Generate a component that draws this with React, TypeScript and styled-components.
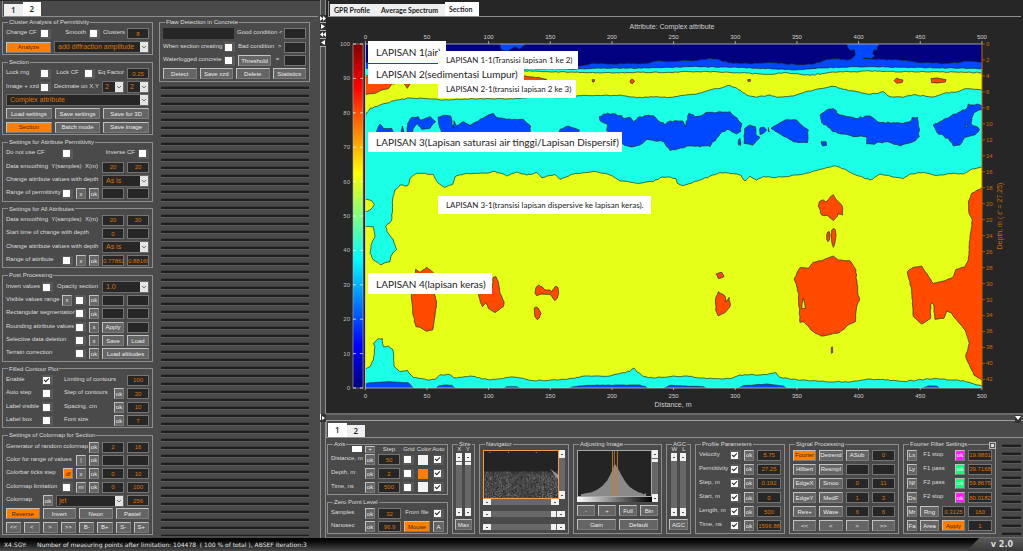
import React from 'react';
import styled, { createGlobalStyle, css } from 'styled-components';

const c = {
  bg: '#4a4a4a',
  dark: '#262626',
  line: '#8e8e8e',
  text: '#dcdcdc',
  orange: '#ff8000',
  value: '#dc7408',
  button: '#656565',
};

const Global = createGlobalStyle`
  *, *::before, *::after { box-sizing: border-box; }
  body { margin: 0; background: ${c.bg}; color: ${c.text}; font: 6px/8px "Liberation Sans", Arial, sans-serif; }
  button, input, select { font: inherit; margin: 0; padding: 0; border-radius: 0; }
`;

const Page = styled.div`
  display: flex;
  flex-direction: column;
  min-height: 100vh;
`;
const Main = styled.main`
  flex: 1;
  display: flex;
`;
const Sidebar = styled.aside`
  flex: 0 0 320px;
  display: flex;
  flex-direction: column;
  border-top: 1px solid #2a2a2a;
`;
const TabBar = styled.nav`
  display: flex;
  align-items: flex-end;
  height: 16px;
  margin: 0 2px 0 2px;
  padding-left: 1px;
  border-left: 1px solid ${c.line};
  border-bottom: 1px solid ${c.line};
`;
const ToolTabBar = styled(TabBar)`
  height: 17px;
  margin: 0;
`;
const Tab = styled.button<{ $on?: boolean; $wide?: boolean }>`
  height: ${p => (p.$on ? 14 : 12)}px;
  padding: ${p => (p.$wide ? '0 7px 0 4px' : '0 7px')};
  border: 0;
  background: ${p => (p.$on ? '#fff' : '#efefef')};
  color: #1c1c1c;
  font: ${p => (p.$wide ? 'bold 7px/10px Lato' : '600 8px/10px "Open Sans"')}, sans-serif;
`;
const SideColumns = styled.div`
  flex: 1;
  display: grid;
  grid-template-columns: 151px 151px;
  gap: 6px;
  padding: 1px 0 0 2px;
`;
const GroupColumn = styled.div`
  display: grid;
  grid-template-rows: minmax(0, 3fr) minmax(0, 6fr) minmax(0, 5fr) minmax(0, 5fr) minmax(0, 7fr) minmax(0, 5fr) minmax(0, 8fr);
`;
const FlawColumn = styled.div`
  display: grid;
  grid-template-rows: minmax(0, 5fr) minmax(0, 34fr);
`;
const Stripes = styled.div<{ $low?: boolean }>`
  margin: ${p => (p.$low ? 4 : 1)}px 1px 2px 2px;
  background: repeating-linear-gradient(#3a3a3a 0 1px, #1f1f1f 1px 3px, #5a5a5a 3px 4px, ${c.bg} 4px 8px);
`;
const Group = styled.fieldset<{ $flush?: boolean }>`
  display: grid;
  grid-auto-rows: minmax(0, 1fr);
  min-width: 0;
  margin: 0 0 3px;
  padding: ${p => (p.$flush ? '0 3px' : '1px 3px 0')};
  border: 1px solid ${c.line};
  legend {
    height: 8px;
    margin-left: 2px;
    padding: 0 1px;
    white-space: nowrap;
  }
`;
const Row = styled.div<{ $cols: string }>`
  display: grid;
  grid-template-columns: ${p => p.$cols};
  gap: 3px;
  align-items: center;
  min-width: 0;
`;
const Label = styled.label<{ $align?: string; $indent?: boolean }>`
  padding-bottom: 3px;
  padding-left: ${p => (p.$indent ? 8 : 0)}px;
  text-align: ${p => p.$align || 'left'};
  white-space: nowrap;
  min-width: 0;
`;
const Value = styled.input`
  width: 100%;
  min-width: 0;
  height: 11px;
  border: 1px solid #757575;
  background: ${c.dark};
  color: ${c.value};
  text-align: center;
`;
const Readout = styled.output`
  height: 11px;
  background: ${c.dark};
`;
const tones: Record<string, [string, string]> = {
  orange: [c.orange, '#3c2600'],
  magenta: ['#ff1cff', '#fff'],
  green: ['#10ff7c', '#fff'],
};
const Btn = styled.button<{ $tone?: string }>`
  width: 100%;
  height: 11px;
  overflow: hidden;
  border: 1px solid;
  border-color: #c2c2c2 #7c7c7c #7c7c7c #c2c2c2;
  background: ${p => (p.$tone ? tones[p.$tone][0] : c.button)};
  color: ${p => (p.$tone ? tones[p.$tone][1] : '#ececec')};
  line-height: 8px;
  white-space: nowrap;
`;
const TickBox = styled.span`
  display: flex;
  align-items: center;
  width: 11px;
  height: 10px;
  padding-left: 1px;
  background: #5a5a5a;
`;
const Tick = styled.input`
  appearance: none;
  width: 7px;
  height: 7px;
  background: #fff;
  &:checked::before {
    content: '';
    display: block;
    width: 5px;
    height: 3px;
    margin: 1px;
    border: solid #222;
    border-width: 0 0 1px 1px;
    transform: rotate(-45deg);
  }
`;
const SelectWrap = styled.span`
  display: grid;
  grid-template-columns: minmax(0, 1fr) 8px;
  height: 12px;
  border: 1px solid #6a6a6a;
  background: ${c.dark};
`;
const SelectBox = styled.select<{ $small?: boolean }>`
  appearance: none;
  grid-area: 1 / 1 / 2 / 3;
  padding-left: ${p => (p.$small ? 2 : 3)}px;
  border: 0;
  background: transparent;
  color: ${c.value};
  font-size: 7px;
`;
const SelectArrow = styled.svg`
  grid-area: 1 / 2;
  width: 8px;
  height: 10px;
  background: #e4e4e4;
  pointer-events: none;
`;

const Check = ({ id, on, label }: { id?: string; on?: boolean; label?: string }) => (
  <TickBox><Tick type="checkbox" id={id} aria-label={label} defaultChecked={on} /></TickBox>
);
const V = ({ id, v = '', label }: { id?: string; v?: string; label?: string }) => (
  <Value id={id} aria-label={label} defaultValue={v} />
);
const Select = ({ id, v, label, small }: { id?: string; v: string; label?: string; small?: boolean }) => (
  <SelectWrap>
    <SelectBox id={id} aria-label={label} defaultValue={v} $small={small}><option>{v}</option></SelectBox>
    <SelectArrow viewBox="0 0 8 10"><path d="M2 4l2 2 2-2" fill="none" stroke="#777" /></SelectArrow>
  </SelectWrap>
);

const SideGroups = () => (
  <GroupColumn>
    <Group>
      <legend>Cluster Analysis of Permittivity</legend>
      <Row $cols="31px 11px 1fr 11px 21px 22px">
        <Label htmlFor="ccf">Change CF</Label><Check id="ccf" />
        <Label htmlFor="smooth" $align="right">Smooth</Label><Check id="smooth" />
        <Label htmlFor="clusters">Clusters</Label><V id="clusters" v="8" />
      </Row>
      <Row $cols="45px 1fr">
        <Btn $tone="orange">Analyze</Btn><Select label="Cluster mode" v="add diffraction amplitude" />
      </Row>
    </Group>
    <Group>
      <legend>Section</legend>
      <Row $cols="31px 11px 27px 11px 1fr 22px">
        <Label htmlFor="lrng">Lock rng</Label><Check id="lrng" />
        <Label htmlFor="lcf" $align="center">Lock CF</Label><Check id="lcf" />
        <Label htmlFor="eq" $align="center">Eq Factor</Label><V id="eq" v="0.25" />
      </Row>
      <Row $cols="31px 11px 1fr 22px 22px">
        <Label htmlFor="xzd">Image + xzd</Label><Check id="xzd" />
        <Label htmlFor="decx" $align="center">Decimate on X,Y</Label>
        <Select id="decx" v="2" small /><Select label="Decimate on Y" v="2" small />
      </Row>
      <Row $cols="1fr"><Select label="Attribute" v="Complex attribute" /></Row>
      <Row $cols="1fr 1fr 1fr"><Btn>Load settings</Btn><Btn>Save settings</Btn><Btn>Save for 3D</Btn></Row>
      <Row $cols="1fr 1fr 1fr"><Btn $tone="orange">Section</Btn><Btn>Batch mode</Btn><Btn>Save image</Btn></Row>
    </Group>
    <Group>
      <legend>Settings for Attribute Permittivity</legend>
      <Row $cols="53px 11px 1fr 11px">
        <Label htmlFor="nocf">Do not use CF</Label><Check id="nocf" />
        <Label htmlFor="inv" $align="right">Inverse CF</Label><Check id="inv" />
      </Row>
      <Row $cols="1fr 22px 22px">
        <Label htmlFor="pds">Data smoothing&nbsp; Y(samples)&nbsp; X(m)</Label><V id="pds" v="20" /><V label="X(m)" v="20" />
      </Row>
      <Row $cols="1fr 47px">
        <Label htmlFor="pdep">Change attribute values with depth</Label><Select id="pdep" v="As is" />
      </Row>
      <Row $cols="1fr 11px 10px 10px 22px 22px">
        <Label htmlFor="prange">Range of permittivity</Label><Check id="prange" />
        <Btn>x</Btn><Btn>ok</Btn><V label="Minimum" /><V label="Maximum" />
      </Row>
    </Group>
    <Group>
      <legend>Settings for All Attributes</legend>
      <Row $cols="1fr 22px 22px">
        <Label htmlFor="ads">Data smoothing&nbsp; Y(samples)&nbsp; X(m)</Label><V id="ads" v="20" /><V label="X(m)" v="20" />
      </Row>
      <Row $cols="1fr 22px 22px">
        <Label htmlFor="ast">Start time of change with depth</Label><V id="ast" v="0" /><V label="End time" />
      </Row>
      <Row $cols="1fr 47px">
        <Label htmlFor="adep">Change attribute values with depth</Label><Select id="adep" v="As is" />
      </Row>
      <Row $cols="1fr 11px 10px 10px 22px 22px">
        <Label htmlFor="arange">Range of attribute</Label><Check id="arange" />
        <Btn>x</Btn><Btn>ok</Btn><V label="Minimum" v="0.77862" /><V label="Maximum" v="0.88169" />
      </Row>
    </Group>
    <Group>
      <legend>Post Processing</legend>
      <Row $cols="33px 11px 1fr 47px">
        <Label htmlFor="invv">Invert values</Label><Check id="invv" />
        <Label htmlFor="opac" $align="center">Opacity section</Label><Select id="opac" v="1.0" />
      </Row>
      <Row $cols="1fr 10px 11px 10px 22px 22px">
        <Label htmlFor="vis">Visible values range</Label><Btn>x</Btn><Check id="vis" /><Btn>ok</Btn>
        <V label="From" /><V label="To" />
      </Row>
      <Row $cols="1fr 11px 10px 22px 22px">
        <Label htmlFor="rect">Rectangular segmentation</Label><Check id="rect" /><Btn>ok</Btn>
        <V label="Width" /><V label="Height" />
      </Row>
      <Row $cols="1fr 11px 10px 22px 22px">
        <Label htmlFor="round">Rounding attribute values</Label><Check id="round" /><Btn>x</Btn>
        <Btn>Apply</Btn><V label="Rounding step" />
      </Row>
      <Row $cols="1fr 11px 10px 22px 22px">
        <Label htmlFor="seldel">Selective data deletion</Label><Check id="seldel" /><Btn>x</Btn>
        <Btn>Save</Btn><Btn>Load</Btn>
      </Row>
      <Row $cols="1fr 11px 10px 47px">
        <Label htmlFor="terrain">Terrain correction</Label><Check id="terrain" /><Btn>ok</Btn><Btn>Load altitudes</Btn>
      </Row>
    </Group>
    <Group>
      <legend>Filled Contour Plot</legend>
      <Row $cols="33px 11px 1fr 22px">
        <Label htmlFor="en">Enable</Label><Check id="en" on />
        <Label htmlFor="lim" $indent>Limiting of contours</Label><V id="lim" v="100" />
      </Row>
      <Row $cols="33px 11px 1fr 10px 22px">
        <Label htmlFor="auto">Auto step</Label><Check id="auto" />
        <Label htmlFor="stepc" $indent>Step of contours</Label><Btn>ok</Btn><V id="stepc" v="20" />
      </Row>
      <Row $cols="33px 11px 1fr 10px 22px">
        <Label htmlFor="lv">Label visible</Label><Check id="lv" />
        <Label htmlFor="spac" $indent>Spacing, cm</Label><Btn>ok</Btn><V id="spac" v="10" />
      </Row>
      <Row $cols="33px 11px 1fr 10px 22px">
        <Label htmlFor="lb">Label box</Label><Check id="lb" />
        <Label htmlFor="fs" $indent>Font size</Label><Btn>ok</Btn><V id="fs" v="7" />
      </Row>
    </Group>
    <Group>
      <legend>Settings of Colormap for Section</legend>
      <Row $cols="1fr 10px 22px 22px">
        <Label htmlFor="gen">Generator of random colormap</Label><Btn>ok</Btn><V id="gen" v="2" /><V label="Colors" v="16" />
      </Row>
      <Row $cols="1fr 10px 10px 22px 22px">
        <Label htmlFor="crv">Color for range of values</Label><Btn>|</Btn><Btn>ok</Btn><V id="crv" /><V label="To" />
      </Row>
      <Row $cols="1fr 10px 10px 10px 22px 22px">
        <Label htmlFor="cts">Colorbar ticks step</Label><Btn $tone="orange">df</Btn><Btn>x</Btn><Btn>ok</Btn>
        <V id="cts" v="0" /><V label="Step" v="10" />
      </Row>
      <Row $cols="1fr 11px 10px 10px 22px 22px">
        <Label htmlFor="cl">Colormap limitation</Label><Check id="cl" /><Btn>m</Btn><Btn>ok</Btn>
        <V label="Low limit" v="0" /><V label="High limit" v="100" />
      </Row>
      <Row $cols="34px 10px 1fr 22px">
        <Label htmlFor="cmap">Colormap</Label><Btn>ok</Btn><Select id="cmap" v="jet" small /><V label="Color count" v="256" />
      </Row>
      <Row $cols="repeat(4, 1fr)"><Btn $tone="orange">Reverse</Btn><Btn>Invert</Btn><Btn>Neon</Btn><Btn>Pastel</Btn></Row>
      <Row $cols="repeat(8, 1fr)">
        {['<<', '<', '>', '>>', 'B-', 'B+', 'S-', 'S+'].map(t => <Btn key={t}>{t}</Btn>)}
      </Row>
    </Group>
  </GroupColumn>
);

const FlawGroup = () => (
  <Group>
    <legend>Flaw Detection in Concrete</legend>
    <Row $cols="71px 1fr 22px">
      <Readout /><Label htmlFor="good">Good condition &lt;</Label><V id="good" />
    </Row>
    <Row $cols="58px 11px 1fr 22px">
      <Label htmlFor="wsc">When section creating</Label><Check id="wsc" />
      <Label htmlFor="bad">Bad condition&nbsp; &gt;</Label><V id="bad" />
    </Row>
    <Row $cols="58px 11px 33px 1fr 22px">
      <Label htmlFor="wc">Waterlogged concrete</Label><Check id="wc" />
      <Btn>Threshold</Btn><Label htmlFor="thr" $align="center">=</Label><V id="thr" />
    </Row>
    <Row $cols="repeat(4, 1fr)"><Btn>Detect</Btn><Btn>Save xzd</Btn><Btn>Delete</Btn><Btn>Statistics</Btn></Row>
  </Group>
);

/* Splitters between the panels */
const VSplit = styled.div`
  flex: 0 0 6px;
  width: 6px;
  min-width: 0;
  display: flex;
  flex-direction: column;
  padding-top: 15px;
  border: solid ${c.line};
  border-width: 0 1px;
`;
const SplitButton = styled.button<{ $bare?: boolean }>`
  display: flex;
  width: 6px;
  height: 8px;
  margin-left: -1px;
  border: solid #b0b0b0;
  border-width: ${p => (p.$bare ? 0 : '0 0 1px')};
  background: #333;
  svg { width: 6px; height: 7px; fill: #fff; }
`;
const SplitSpacer = styled.div`
  flex: 1;
`;
const SplitFoot = styled.div`
  flex: 0 0 124px;
`;
const HSplit = styled.div`
  display: flex;
  justify-content: flex-end;
  height: 8px;
  padding-right: 2px;
  border-top: 2px solid #6c6c6c;
  border-bottom: 1px solid #a0a0a0;
`;

const Work = styled.div`
  flex: 1;
  min-width: 0;
  display: flex;
  flex-direction: column;
`;
const PlotPanel = styled.section`
  flex: 1;
  padding-top: 1px;
  background: ${c.dark};
`;
const Plot = styled.svg`
  display: block;
  width: 100%;
  height: auto;
`;

/* Contour outlines, in thirds of a chart unit from (320, 0) */
type Pt = [number, number];
const pts = (s: string, dx = 0, dy = 0): Pt[] =>
  s.trim().split(/\s+/).map(t => {
    const [x, y] = t.split(',').map(Number);
    return [x + dx, y + dy] as Pt;
  });
const R = (s: string) => pts(s, 1050, 0);
const L = (s: string) => pts(s);
const LR = (s: string) => pts(s, 1050, 630);

let seed = 7;
const rnd = () => {
  seed = (seed * 16807) % 2147483647;
  return seed / 2147483647;
};
const rough = (list: Pt[], amp = 3): string => {
  const out: string[] = [];
  list.forEach(([x, y], i) => {
    const [nx, ny] = list[(i + 1) % list.length];
    const n = Math.max(1, Math.min(70, Math.round(Math.hypot(nx - x, ny - y) / 8)));
    for (let k = 0; k < n; k++) {
      const t = k / n;
      const j = k ? amp : 0;
      out.push(`${Math.round(x + (nx - x) * t + (rnd() - 0.5) * j)},${Math.round(y + (ny - y) * t + (rnd() - 0.5) * j)}`);
    }
  });
  return out.join(' ');
};

const NAVY = '#000080';
const BLUE = '#0048ff';
const CYAN = '#1affe5';
const YELLOW = '#e6ff19';
const RED = '#ff4a00';

const upperYellow = [
  ...L('120,226 612,212 700,216 850,218 1050,217'),
  ...R('100,214 200,218 300,223 350,218 420,226 480,217 600,213 700,215 945,218'),
  ...R('945,272 890,266 860,276 830,278 790,291 730,284 700,292 660,290 640,275 600,283 520,268 490,259 450,266 400,278 370,288 320,292 300,285 260,292 230,285 200,264 180,256 150,265 120,270 80,282 40,286 0,292'),
  ...L('1000,291 950,293 900,285 850,286 790,286 750,292 640,292 570,296 450,296 370,300 330,297 270,294 230,300 180,315 150,325 136,350 120,350'),
];
const upperBlue = [
  ...L('120,120'), ...R('945,120 945,206 700,202 560,200 450,204 380,210 200,202 60,200'),
  ...L('1050,202 950,205 850,204 770,207 120,204'),
];
const navy = [
  ...L('120,120 540,120 540,134 545,150 565,153 585,140 600,148 615,134 615,120'),
  ...R('528,120 532,140 543,152 552,148 556,165 545,176 530,180 490,176 460,182 430,192 380,194 340,190 300,187 240,191 175,188 150,180 120,175 100,178 75,182 40,181 0,184'),
  ...L('1020,182 980,190 870,192 820,190 770,200 355,187 120,187'),
];
const navyRight = R('627,120 945,120 945,188 900,183 830,190 760,188 690,180 620,178 580,175 604,176 615,168 608,160 612,150 622,150');
const lowerYellow = [
  ...L('120,679 160,680 165,710 155,730 150,760 160,780 180,794 210,785 215,765 230,748 220,720 205,700 197,680 215,660 218,630 218,600 225,570 240,555 262,558 275,530 290,520 340,523 355,550 375,562 398,553 405,530 440,520 500,520 525,514 560,528 590,516 620,525 650,518 665,533 705,523 720,538 760,522 820,514 870,525 900,543 950,550 1000,545 1020,533 1050,531'),
  ...R('18,536 22,550 40,557 90,540 150,518 200,522 212,525 225,543 240,528 260,540 280,530 320,532 390,524 440,512 490,498 510,502 550,522 600,540 630,522 700,536 720,522 760,517 800,527 850,520 880,522 900,510 945,499'),
  ...R('945,1160 936,1158 880,1142 790,1136 700,1144 600,1137 540,1146 450,1144 380,1139 330,1132 318,1118 290,1124 210,1125 180,1136 110,1136 50,1128'),
  ...L('1050,1130 1000,1134 970,1130 950,1115 942,1104 930,1114 900,1120 870,1128 800,1128 740,1138 640,1142 580,1131 510,1140 450,1128 400,1133 390,1124 360,1124 345,1138 330,1140 280,1132 262,1111 240,1115 222,1098 218,1048 205,1038 190,1040 187,1016 175,1016 160,1030 165,1040 160,1080 150,1100 136,1108 120,1108'),
];

const shapes: [string, Pt[], number?][] = [
  [BLUE, upperBlue, 2],
  [NAVY, navy, 3],
  [NAVY, navyRight, 3],
  [YELLOW, upperYellow, 3],
  [RED, L('120,229 160,232 235,240 225,252 215,252 205,266 180,272 165,280 120,285')],
  [RED, L('250,250 262,265 272,250')],
  [RED, L('600,228 625,230 655,232 680,238 655,245 600,242')],
  [RED, L('816,239 824,239 822,246 818,246'), 0],
  [RED, L('930,242 936,237 944,243 938,251 932,249'), 0],
  [RED, R('233,239 241,238 241,244 234,244'), 0],
  [RED, R('672,242 680,234 688,238 699,240 697,247 680,250'), 1],
  [RED, R('783,236 800,234 828,239 826,246 800,249 785,248'), 1],
  [YELLOW, lowerYellow],
  [YELLOW, L('120,598 140,598 155,602 163,613 158,622 150,630 142,634 120,636'), 0],
  [BLUE, L('165,400 180,372 190,385 215,385 222,400')],
  [BLUE, L('243,400 247,378 252,400'), 1],
  [BLUE, L('260,400 263,370 275,352 295,350 300,360 330,350 347,365 330,385 305,388 292,370 280,385 278,400')],
  [BLUE, L('354,352 370,346 392,348 396,365 400,385 402,362 410,378 430,365 450,376 480,358 520,340 530,352 560,358 610,358 632,378 628,400 365,400 356,370')],
  [BLUE, L('716,400 720,388 745,378 778,390 776,400')],
  [BLUE, [
    ...L('838,350 850,342 880,341 918,355 930,352 940,365 960,350 1000,347 1012,360 1035,375 1050,363'),
    ...R('38,363 47,380 57,340 75,350 120,337 180,335 195,350 215,370 212,395 200,402 185,395 170,388 150,402 120,440 60,438 0,452'),
    ...L('1030,425 980,418 960,435 930,440 905,430 870,400 860,392 862,372 840,362'),
  ], 5],
  [BLUE, R('224,386 240,375 256,380 258,405 270,412 248,436 222,430')],
  [BLUE, R('270,384 282,382 290,390 280,400 270,404'), 2],
  [BLUE, R('205,420 210,415 212,436 205,434'), 1],
  [BLUE, R('295,382 298,396 295,394'), 1],
  [BLUE, R('303,385 345,360 380,360 400,380 415,390 412,428 370,425 335,405')],
  [BLUE, R('453,425 468,425 470,436 458,438'), 1],
  [BLUE, R('450,345 470,330 490,326 510,345 555,355 600,348 630,368 700,370 720,365 727,352 743,352 748,410 730,425 690,438 650,425 605,432 590,432 588,410 550,410 490,395 470,375 455,368'), 5],
  [BLUE, R('790,375 830,355 870,335 890,325 895,312 945,317 945,326 912,338 903,370 928,388 915,405 885,412 870,435 850,438 835,415 800,397'), 5],
  [CYAN, R('887,374 891,374 891,382 887,382'), 0],
  [BLUE, L('120,1152 170,1147 210,1145 265,1148 290,1175 120,1175'), 1],
  [BLUE, L('345,1170 355,1158 375,1155 395,1156 412,1170'), 1],
  [BLUE, L('545,1170 560,1160 590,1160 610,1170'), 1],
  [BLUE, L('735,1170 760,1160 800,1156 960,1155 980,1162 990,1175'), 1],
  [BLUE, L('1010,1175 1050,1156 1150,1160 1180,1175'), 1],
  [BLUE, R('195,1170 220,1157 290,1152 340,1158 355,1170'), 1],
  [BLUE, R('745,1170 775,1158 800,1158 815,1170'), 1],
  [RED, L('287,808 300,817 320,802 340,818 342,880 350,905 345,950 338,990 320,994 300,982 288,980 278,940 274,885'), 2],
  [RED, L('475,885 515,870 520,832 528,830 535,845 540,880 552,905 550,920 525,938 505,925 497,908 487,920'), 2],
  [RED, L('645,880 648,862 656,855 668,862 675,870 690,870 694,876 706,859 714,862 716,880 712,894 705,902 690,883 665,882 650,887'), 1],
  [RED, L('643,924 648,921 655,925 663,940 658,954 652,959 645,950'), 1],
  [RED, R('445,618 448,605 460,600 468,606 490,584 500,600 518,622 518,645 505,642 490,662 475,648 455,645'), 3],
  [RED, LR('470,75 473,66 478,65 480,75 478,90 474,95 470,88'), 0],
  [RED, LR('485,60 492,55 496,60 498,75 495,98 490,112 486,100 484,80'), 0],
  [RED, LR('138,192 155,187 162,200 145,206'), 2],
  [RED, LR('145,245 165,258 168,276 178,262 180,290 165,308 145,318 137,300 137,265')],
  [RED, LR('373,205 390,173 415,175 430,157 460,150 490,138 505,150 540,152 558,180 563,245 569,270 560,290 556,335 540,342 510,367 475,375 453,378 430,365 400,335 390,337 386,250')],
  [YELLOW, LR('398,266 401,266 407,295 395,296'), 1],
  [RED, LR('484,412 487,410 488,428 484,430'), 0],
  [RED, LR('712,185 730,172 755,168 770,190 790,220 825,212 850,200 858,178 885,170 895,150 900,80 907,30 897,10 895,-25 905,-50 936,-67 950,-70 950,512 936,510 912,495 905,480 887,440 898,400 885,360 860,330 845,310 830,303 822,325 795,328 790,282 786,278 782,285 782,325 755,342 730,320 725,240'), 2],
];
const contours = shapes.map(([fill, list, amp]) => ({ fill, points: rough(list, amp ?? 3) }));

const notes: [number, number, number, number, number, string][] = [
  [368, 41, 78, 22, 10, 'LAPISAN 1(air)'],
  [368, 64, 156, 20, 10, 'LAPISAN 2(sedimentasi Lumpur)'],
  [438, 51, 140, 18, 8, 'LAPISAN 1-1(Transisi lapisan 1 ke 2)'],
  [438, 80, 138, 18, 8, 'LAPISAN 2-1(transisi lapisan 2 ke 3)'],
  [368, 132, 254, 20, 10, 'LAPISAN 3(Lapisan saturasi air tinggi/Lapisan Dispersif)'],
  [438, 196, 213, 18, 8, 'LAPISAN 3-1(transisi lapisan dispersive ke lapisan keras).'],
  [368, 273, 124, 21, 10, 'LAPISAN 4(lapisan keras)'],
];

const steps = (n: number) => Array.from({ length: n }, (_, i) => i);

const SectionPlot = () => (
  <Plot viewBox="326 17 697 396" role="img" aria-label="Section of complex attribute">
    <defs>
      <linearGradient id="jet" x1="0" y1="1" x2="0" y2="0">
        <stop offset="0" stopColor="#00007c" /><stop offset=".125" stopColor="#0000ff" />
        <stop offset=".375" stopColor="#00ffff" /><stop offset=".625" stopColor="#ffff00" />
        <stop offset=".875" stopColor="#ff0000" /><stop offset="1" stopColor="#800000" />
      </linearGradient>
      <clipPath id="area"><rect x="365" y="44" width="617" height="344" /></clipPath>
    </defs>
    <text x="672" y="29" textAnchor="middle" fontSize="7" fill="#cfcfcf">Attribute:  Complex attribute</text>
    <rect x="353" y="44" width="10" height="344" fill="url(#jet)" stroke="#b0b0b0" strokeWidth=".6" />
    {steps(11).map(i => {
      const y = 388 - i * 34.4;
      return (
        <g key={i}>
          <path d={`M353 ${y}h3M360 ${y}h3`} stroke="#fff" strokeWidth=".7" />
          <text x="350" y={y + 2} textAnchor="end" fontSize="6" fill="#bdbdbd">{i * 10}</text>
        </g>
      );
    })}
    <g clipPath="url(#area)">
      <rect x="365" y="44" width="617" height="344" fill={CYAN} />
      <g transform="translate(320 0) scale(.33333)" stroke="#1c2420" strokeWidth="2" strokeLinejoin="round">
        {contours.map((s, i) => <polygon key={i} points={s.points} fill={s.fill} />)}
      </g>
    </g>
    <path d="M365.5 388V44M365 44H982M365 388H982" fill="none" stroke="#c4c4c4" strokeWidth=".8" />
    {steps(11).map(i => {
      const x = 365.3 + i * 61.66;
      return (
        <g key={i} fontSize="6" fill="#cfcfcf" textAnchor="middle">
          <path d={`M${x} 41v3M${x} 388v2`} stroke="#c4c4c4" strokeWidth=".8" />
          <text x={x} y="39">{i * 50}</text>
          <text x={x} y="398">{i * 50}</text>
        </g>
      );
    })}
    <text x="673" y="407" textAnchor="middle" fontSize="7" fill="#cfcfcf">Distance, m</text>
    <path d="M982 44V388" stroke="#c86400" />
    {steps(22).map(i => {
      const y = 44 + i * 15.97;
      return (
        <g key={i}>
          <path d={`M982 ${y}h3`} stroke="#c86400" strokeWidth=".8" />
          <text x="986" y={y + 2} fontSize="6" fill="#d06a04">{i * 2}</text>
        </g>
      );
    })}
    <text transform="translate(1002 216) rotate(-90)" textAnchor="middle" fontSize="7" fill="#d06a04">Depth, m ( ε' = 27.25)</text>
    {notes.map(([x, y, w, h, size, t]) => (
      <g key={t}>
        <rect x={x} y={y} width={w} height={h} fill="#fff" />
        <text x={x + 8} y={y + h / 2 + (size > 9 ? 4 : 3)} fontSize={size} fill="#222" fontFamily="Lato, sans-serif">{t}</text>
      </g>
    ))}
  </Plot>
);

/* Bottom tool panel */
const Tools = styled.section`
  display: flex;
  flex-direction: column;
  flex: none;
  height: 117px;
  border-bottom: 1px solid #707070;
`;
const ToolGrid = styled.div`
  flex: 1;
  min-height: 0;
  display: grid;
  grid-template-rows: minmax(0, 1fr);
  grid-template-columns: 121fr 23fr 90fr 89fr 25fr 90fr 110fr 93fr 22fr;
  gap: 4px;
  padding: 2px 1px 0;
`;
const Stack = styled.div`
  display: grid;
  grid-template-rows: minmax(0, 57fr) minmax(0, 38fr);
  min-width: 0;
`;
const AxisBody = styled.div`
  display: grid;
  grid-template-rows: 8px;
  grid-auto-rows: minmax(0, 1fr);
  margin-top: -3px;
`;
const Swatch = styled.span<{ $color: string; $short?: boolean }>`
  width: 10px;
  height: ${p => (p.$short ? 6 : 10)}px;
  background: ${p => p.$color};
`;
const HeadText = styled.span`
  display: flex;
  justify-content: center;
  min-width: 0;
  white-space: nowrap;
`;
const PlusBtn = styled(Btn)`
  height: 7px;
  line-height: 5px;
`;
const Body = styled.div<{ $loose?: boolean }>`
  display: flex;
  flex-direction: column;
  gap: ${p => (p.$loose ? 6 : 3)}px;
  min-width: 0;
  padding: 2px 0 3px;
`;
const SliderBody = styled(Body)`
  padding-top: 0;
  margin: -3px -1px 0;
`;
const Heads = styled.div`
  display: flex;
  justify-content: space-around;
  height: 5px;
`;
const Sliders = styled.div`
  flex: 1;
  display: flex;
  justify-content: space-around;
`;
const Bar = styled.div<{ $h?: boolean; $short?: boolean }>`
  display: flex;
  flex-direction: ${p => (p.$h ? 'row' : 'column')};
  justify-content: space-between;
  flex: none;
  ${p => (p.$h ? css`height: 6px;` : css`width: 6px;`)}
  margin-bottom: ${p => (p.$short ? 6 : 0)}px;
  background: #686868;
`;
const Arrow = styled.button<{ $h?: boolean }>`
  display: flex;
  align-items: center;
  justify-content: center;
  width: ${p => (p.$h ? 8 : 6)}px;
  height: ${p => (p.$h ? 6 : 8)}px;
  border: 0;
  background: #f1f1f1;
  &::before { content: ''; width: 2px; height: 1px; background: #555; }
`;
const Thumb = styled.div<{ $h?: boolean }>`
  width: ${p => (p.$h ? 5 : 6)}px;
  height: ${p => (p.$h ? 6 : 3)}px;
  background: #f1f1f1;
`;
const Run = styled.div<{ $h?: boolean }>`
  display: flex;
  gap: 1px;
  flex-direction: ${p => (p.$h ? 'row' : 'column')};
`;
const Scroll = ({ h, short, thumb, label }: { h?: boolean; short?: boolean; thumb?: 'start' | 'end'; label: string }) => (
  <Bar $h={h} $short={short}>
    <Run $h={h}><Arrow $h={h} aria-label={label + ' less'} />{thumb === 'start' && <Thumb $h={h} />}</Run>
    <Run $h={h}>{thumb === 'end' && <Thumb $h={h} />}<Arrow $h={h} aria-label={label + ' more'} /></Run>
  </Bar>
);
const View = styled.div`
  flex: 1;
  display: flex;
  min-height: 0;
`;
const Picture = styled.svg<{ $edge: string }>`
  flex: 1;
  width: 100%;
  min-height: 0;
  border: 1px solid ${p => p.$edge};
  background: #242424;
`;
const ViewSide = styled.div`
  flex: 1;
  min-width: 0;
  display: flex;
  flex-direction: column;
`;
const BarGap = styled.div`
  display: grid;
  gap: 7px;
`;
const Ramp = styled.div`
  height: 5px;
  background: linear-gradient(90deg, #fff, #000);
`;
const FourierGroup = styled(Group)`
  position: relative;
`;
const Corner = styled.button`
  position: absolute;
  top: -6px;
  right: -1px;
  width: 7px;
  height: 7px;
  border: 1px solid #b8b8b8;
  background: #555;
  &::before { content: ''; display: block; width: 3px; height: 3px; margin: 1px; border: 1px solid #ddd; border-top-width: 2px; }
`;

/* Radargram thumbnail: grey speckle grouped by shade */
const speckle = (() => {
  const paths: string[] = ['', '', '', '', ''];
  for (let x = 0; x < 75; x++) {
    const col = rnd() * 1.3;
    for (let y = 21; y < 48; y++) {
      const v = rnd() * 3.4 + col - (y < 24 ? 0.8 : 0) - y / 60;
      const k = Math.max(0, Math.min(4, Math.floor(v)));
      paths[k] += `M${x} ${y}h1v1h-1z`;
    }
  }
  return paths;
})();
const greys = ['#333', '#484848', '#606060', '#787878', '#949494'];

const bell =
  'M3 49L3 47 8 46 14 45 20 42 25 38 30 32 33 26 36 19 37 15 38 14 39 16 42 21 45 27 49 34 53 39 57 42 62 45 66 46 67 47 70 46 70 49z';

const profile: [string, string][] = [
  ['Velocity', '5.75'], ['Permittivity', '27.25'], ['Step, m', '0.192'],
  ['Start, m', '0'], ['Length, m', '500'], ['Time, ns', '1596.88'],
];
const signal: [string, string, string, string][] = [
  ['Fourier', 'Detrend', 'ASub', '0'], ['Hilbert', 'Resmpl', '', ''], ['EdgeX', 'Smoo', '0', '11'],
  ['EdgeY', 'MedF', '1', '3'], ['Res+', 'Wave', '6', '6'],
];
const fourier: [string, string, string, string][] = [
  ['Lx', 'F1 stop', 'magenta', '19.9801'], ['Ly', 'F1 pass', 'green', '39.7168'],
  ['Nf', 'F2 pass', 'green', '59.8675'], ['Ds', 'F2 stop', 'magenta', '80.0182'],
];

const ToolPanel = () => (
  <Tools>
    <ToolTabBar><Tab $on>1</Tab><Tab>2</Tab></ToolTabBar>
    <ToolGrid>
      <Stack>
        <Group $flush>
          <legend>Axis</legend>
          <AxisBody>
            <Row $cols="18px 10px 10px 1fr 12px 12px 11px">
              <span /><Swatch $color="#fff" $short /><PlusBtn aria-label="Add axis">+</PlusBtn>
              <HeadText>Step</HeadText><HeadText>Grid</HeadText><HeadText>Color</HeadText><HeadText>Auto</HeadText>
            </Row>
            {[['Distance, m', '50', '#f2f2f2'], ['Depth, m', '2', c.orange], ['Time, ns', '500', '#f2f2f2']].map(([n, v, col]) => (
              <Row key={n} $cols="31px 10px 1fr 12px 12px 11px">
                <Label htmlFor={'ax' + n[0] + n[1]}>{n}</Label><Btn>ok</Btn><V id={'ax' + n[0] + n[1]} v={v} />
                <Check label={n + ' grid'} /><Swatch $color={col} /><Check label={n + ' auto'} on />
              </Row>
            ))}
          </AxisBody>
        </Group>
        <Group>
          <legend>Zero Point Level</legend>
          <Row $cols="31px 10px 23px 1fr 11px">
            <Label htmlFor="smp">Samples</Label><Btn>ok</Btn><V id="smp" v="32" />
            <Label htmlFor="ff" $align="center">From file</Label><Check id="ff" on />
          </Row>
          <Row $cols="31px 10px 23px 1fr 11px">
            <Label htmlFor="nano">Nanosec</Label><Btn>ok</Btn><V id="nano" v="96.9" />
            <Btn $tone="orange">Mouse</Btn><Btn>A</Btn>
          </Row>
        </Group>
      </Stack>
      <Group $flush>
        <legend>Size</legend>
        <SliderBody>
          <Heads><span>X</span><span>Y</span></Heads>
          <Sliders><Scroll label="X size" thumb="start" /><Scroll label="Y size" thumb="start" /></Sliders>
          <Btn>Max</Btn>
        </SliderBody>
      </Group>
      <Group $flush>
        <legend>Navigator</legend>
        <Body $loose>
          <View>
            <ViewSide>
              <Picture $edge="#ff9a3c" viewBox="0 0 75 48" preserveAspectRatio="none" aria-hidden>
                {speckle.map((d, i) => <path key={i} d={d} fill={greys[i]} />)}
                <path d="M67 18l5 4 3 2v5z" fill="#999" />
                <path d="M6 1v1M25 1v1M53 1v1" stroke="#999" />
              </Picture>
              <Scroll h label="Navigator horizontal" />
            </ViewSide>
            <Scroll short label="Navigator vertical" />
          </View>
          <BarGap>
            <Scroll h thumb="end" label="Contrast" />
            <Scroll h thumb="end" label="Brightness" />
          </BarGap>
        </Body>
      </Group>
      <Group $flush>
        <legend>Adjusting Image</legend>
        <Body>
          <View>
            <ViewSide>
              <Picture $edge="#a8a8a8" viewBox="0 0 75 49" preserveAspectRatio="none" aria-hidden>
                <path d={bell} fill="#8a8a8a" />
                <path d="M37.5 0V15" stroke="#777" />
                <path d="M35.5 0V49M40.5 0V49" stroke="#d87818" />
              </Picture>
              <Ramp />
            </ViewSide>
            <Scroll label="Level" thumb="start" />
          </View>
          <Row $cols="repeat(4, 1fr)"><Btn>-</Btn><Btn>+</Btn><Btn>Full</Btn><Btn>Bin</Btn></Row>
          <Row $cols="1fr 1fr"><Btn>Gain</Btn><Btn>Default</Btn></Row>
        </Body>
      </Group>
      <Group $flush>
        <legend>AGC</legend>
        <SliderBody>
          <Heads><span>W</span><span>L</span></Heads>
          <Sliders><Scroll label="Window" /><Scroll label="Level" /></Sliders>
          <Btn>AGC</Btn>
        </SliderBody>
      </Group>
      <Group $flush>
        <legend>Profile Parameters</legend>
        {profile.map(([n, v]) => (
          <Row key={n} $cols="1fr 11px 10px 24px">
            <Label htmlFor={'pp' + n}>{n}</Label><Check label={n + ' enabled'} on /><Btn>ok</Btn><V id={'pp' + n} v={v} />
          </Row>
        ))}
      </Group>
      <Group $flush>
        <legend>Signal Processing</legend>
        {signal.map(([a, b, x, y], i) => (
          <Row key={a} $cols="repeat(4, 1fr)">
            <Btn $tone={i ? undefined : 'orange'}>{a}</Btn><Btn>{b}</Btn>
            {i ? <V label={b + ' first'} v={x} /> : <Btn>{x}</Btn>}
            <V label={b + ' second'} v={y} />
          </Row>
        ))}
        <Row $cols="repeat(4, 1fr)"><Btn>&lt;&lt;</Btn><Btn>&lt;</Btn><Btn>&gt;</Btn><Btn>&gt;&gt;</Btn></Row>
      </Group>
      <FourierGroup $flush>
        <legend>Fourier Filter Settings</legend>
        {fourier.map(([b, n, tone, v]) => (
          <Row key={b} $cols="10px 1fr 10px 24px">
            <Btn>{b}</Btn><Label htmlFor={'ff' + b}>&nbsp; {n}</Label><Btn $tone={tone}>ok</Btn><V id={'ff' + b} v={v} />
          </Row>
        ))}
        <Row $cols="10px 1fr 23px 24px"><Btn>Mr</Btn><Btn>Rng</Btn><V label="Range" v="0.3125" /><V label="Range limit" v="160" /></Row>
        <Row $cols="10px 1fr 23px 24px"><Btn>Fa</Btn><Btn>Area</Btn><Btn $tone="orange">Apply</Btn><V label="Area" v="1" /></Row>
        <Corner aria-label="Detach panel" />
      </FourierGroup>
      <Stripes $low />
    </ToolGrid>
  </Tools>
);

const Footer = styled.footer`
  display: flex;
  align-items: stretch;
  justify-content: space-between;
  height: 13px;
  padding-left: 4px;
  background: linear-gradient(#000 0, #0c0c0c 30%, #4c4c4c 100%);
`;
const Status = styled.p`
  display: flex;
  gap: 10px;
  margin: 0;
  padding-top: 3px;
  color: #e2e2e2;
  font: 6px/8px "DejaVu Sans", sans-serif;
`;
const Version = styled.strong`
  width: 56px;
  padding: 1px 10px 0 0;
  text-align: right;
  background: linear-gradient(#5a5a5a, #3a3a3a);
  clip-path: polygon(12px 0, 100% 0, 100% 100%, 0 100%);
  font: bold 8px/11px "DejaVu Sans", sans-serif;
`;

const arrows = ['M0 1l3 2.5L0 6zM3 1l3 2.5L3 6z', 'M1 1l4 2.5L1 6z', 'M3 1L0 3.5 3 6zM6 1L3 3.5 6 6z', 'M5 1L1 3.5 5 6z'];

export default function App() {
  return (
    <Page>
      <Global />
      <Main>
        <Sidebar>
          <TabBar><Tab>1</Tab><Tab $on>2</Tab></TabBar>
          <SideColumns>
            <SideGroups />
            <FlawColumn><FlawGroup /><Stripes /></FlawColumn>
          </SideColumns>
        </Sidebar>
        <VSplit>
          {arrows.map(d => (
            <SplitButton key={d} aria-label="Move splitter"><svg viewBox="0 0 6 7"><path d={d} /></svg></SplitButton>
          ))}
          <SplitSpacer />
          <SplitFoot>
            <SplitButton $bare aria-label="Collapse panel"><svg viewBox="0 0 6 7"><path d="M0 0h1v6h-1zM2 2l3 2-3 2z" /></svg></SplitButton>
          </SplitFoot>
        </VSplit>
        <Work>
          <PlotPanel>
            <TabBar><Tab $wide>GPR Profile</Tab><Tab $wide>Average Spectrum</Tab><Tab $wide $on>Section</Tab></TabBar>
            <SectionPlot />
          </PlotPanel>
          <HSplit>
            <SplitButton $bare aria-label="Collapse tools"><svg viewBox="0 0 6 7"><path d="M0 1h6L3 5z" /></svg></SplitButton>
          </HSplit>
          <ToolPanel />
        </Work>
      </Main>
      <Footer>
        <Status><span>X4.SGY:</span><span>Number of measuring points after limitation: 104478&nbsp; ( 100 % of total ), ABSEF iteration:3</span></Status>
        <Version>v 2.0</Version>
      </Footer>
    </Page>
  );
}
